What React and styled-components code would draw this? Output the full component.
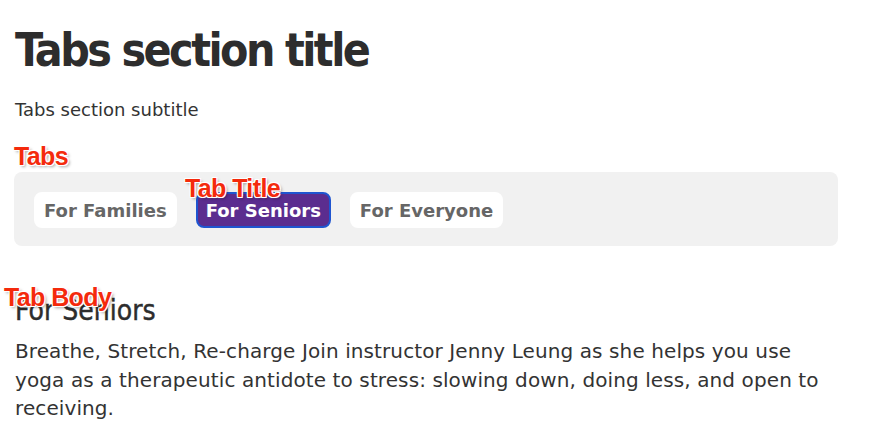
import styled, { createGlobalStyle } from 'styled-components'

const GlobalStyle = createGlobalStyle`
  body {
    margin: 0;
    background: #fff;
    font-family: "DejaVu Sans", Verdana, sans-serif;
    color: #333;
  }
`

const Page = styled.div`
  position: relative;
  display: flex;
  flex-direction: column;
  align-items: flex-start;
  padding: 22px 15px 0 15px;
  width: 873px;
  box-sizing: border-box;
`

const Title = styled.h1`
  margin: 0;
  font-family: "DejaVu Sans Condensed", "DejaVu Sans", sans-serif;
  font-weight: 700;
  font-size: 46px;
  line-height: 56px;
  color: #2d2d2d;
  letter-spacing: -2.5px;
`

const Subtitle = styled.p`
  margin: 21px 0 0;
  font-size: 18px;
  line-height: 22px;
  color: #333;
`

const TabList = styled.div`
  display: flex;
  gap: 19px;
  margin: 51px 0 0 -1px;
  padding: 20px 20px 18px;
  width: 824px;
  box-sizing: border-box;
  background: #f1f1f1;
  border-radius: 8px;
`

const TabButton = styled.button`
  height: 36px;
  padding: 0 8px;
  border: 2px solid ${({ $active }) => ($active ? '#1f55d0' : '#fff')};
  border-radius: 8px;
  background: ${({ $active }) => ($active ? '#5b2d8f' : '#fff')};
  color: ${({ $active }) => ($active ? '#fff' : '#666')};
  font-family: "DejaVu Sans", Verdana, sans-serif;
  font-weight: 700;
  font-size: 18px;
  cursor: pointer;
`

const Body = styled.div`
  margin-top: 49px;
`

const BodyTitle = styled.h2`
  margin: 0;
  font-family: "DejaVu Sans Condensed", "DejaVu Sans", sans-serif;
  font-weight: 400;
  font-size: 28px;
  line-height: 32px;
  color: #2d2d2d;
  -webkit-text-stroke: 0.4px #2d2d2d;
`

const BodyText = styled.p`
  margin: 10px 0 0;
  width: 808px;
  font-size: 20px;
  line-height: 28.5px;
  letter-spacing: 0.1px;
  color: #333;
`

const Note = styled.span`
  position: absolute;
  left: ${({ $x }) => $x}px;
  top: ${({ $y }) => $y}px;
  font-family: "Liberation Sans", Arial, sans-serif;
  font-weight: 700;
  font-size: 25px;
  line-height: 29px;
  color: #f42a0c;
  letter-spacing: -0.6px;
  text-shadow: 0 0 2px #fff, 1px 1px 0 #fff, -1px -1px 0 #fff, 1px -1px 0 #fff, -1px 1px 0 #fff, 2px 2px 3px rgba(0, 0, 0, 0.35);
`

const tabs = ['For Families', 'For Seniors', 'For Everyone']

export default function App() {
  return (
    <Page>
      <GlobalStyle />
      <Title>Tabs section title</Title>
      <Subtitle>Tabs section subtitle</Subtitle>

      <TabList>
        {tabs.map((t) => (
          <TabButton key={t} $active={t === 'For Seniors'}>{t}</TabButton>
        ))}
      </TabList>

      <Body>
        <BodyTitle>For Seniors</BodyTitle>
        <BodyText>
          Breathe, Stretch, Re-charge Join instructor Jenny Leung as she helps you use yoga as a therapeutic antidote to stress: slowing down, doing less, and open to receiving.
        </BodyText>
      </Body>

      <Note $x={14} $y={142}>Tabs</Note>
      <Note $x={185} $y={174}>Tab Title</Note>
      <Note $x={4} $y={283}>Tab Body</Note>
    </Page>
  )
}
